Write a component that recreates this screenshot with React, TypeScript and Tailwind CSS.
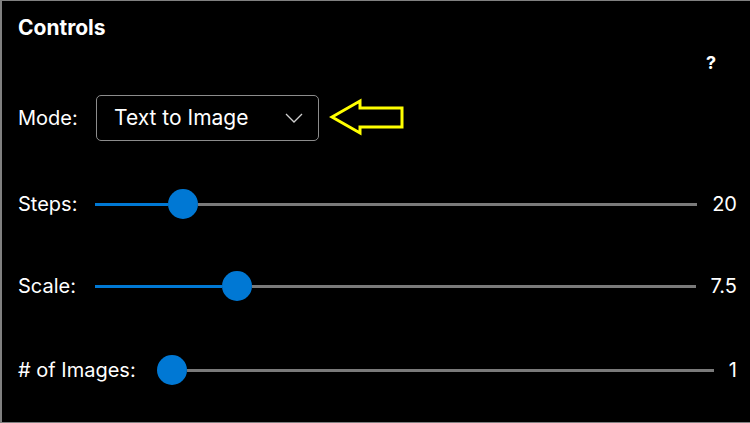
import React from "react";

type SliderProps = {
  label: string;
  labelWidth: string;
  value: string;
  frac: number;
};

function SliderRow({ label, labelWidth, value, frac }: SliderProps) {
  return (
    <div className="flex items-center h-[30px]">
      <span className={`${labelWidth} shrink-0 text-[20px] text-white`}>{label}</span>
      <div className="flex flex-1 items-center h-[30px]">
        {/* filled part of the track runs under the thumb */}
        <div
          className="h-[3px] bg-[#0078d4] shrink-0"
          style={{ width: `calc((100% - 30px) * ${frac})` }}
        ></div>
        <div className="w-[30px] h-[30px] rounded-full bg-[#0078d4] shrink-0"></div>
        <div className="h-[3px] flex-1 bg-[#7a7a7a]"></div>
      </div>
      <span className="ml-[15px] text-[20px] text-white">{value}</span>
    </div>
  );
}

function ArrowIcon() {
  return (
    <svg width="78" height="40" viewBox="0 0 78 40" className="ml-[10px]">
      <polygon
        points="3,19 31,3 31,10 73,10 73,29 31,29 31,35"
        fill="none"
        stroke="#ffff00"
        strokeWidth="3"
        strokeLinejoin="miter"
      />
    </svg>
  );
}

export default function App() {
  return (
    <div
      className="w-[750px] h-[423px] bg-black border-l-2 border-t border-b border-[#808080] flex flex-col pl-4 pr-[13px] text-white"
      style={{ fontFamily: "Inter, 'Noto Sans', sans-serif" }}
    >
      <div className="h-[54px] flex items-center">
        <h2 className="text-[21px] font-bold">Controls</h2>
      </div>
      <div className="h-[14px] flex items-center justify-end pr-[21px]">
        <span className="text-[18px] font-bold">?</span>
      </div>

      <div className="mt-[26px] h-[46px] flex items-center">
        <span className="w-[78px] shrink-0 text-[20px]">Mode:</span>
        <button className="w-[223px] h-[46px] flex items-center justify-between border border-[#8c8c8c] rounded-[5px] pl-[17px] pr-[15px] text-[21px]">
          <span>Text to Image</span>
          <svg width="18" height="10" viewBox="0 0 18 10">
            <path d="M1 1 L9 9 L17 1" fill="none" stroke="#cfcfcf" strokeWidth="1.3" />
          </svg>
        </button>
        <ArrowIcon />
      </div>

      <div className="mt-[48px]">
        <SliderRow label="Steps:" labelWidth="w-[77px]" value="20" frac={0.127} />
      </div>
      <div className="mt-[52px]">
        <SliderRow label="Scale:" labelWidth="w-[77px]" value="7.5" frac={0.222} />
      </div>
      <div className="mt-[54px]">
        <SliderRow label="# of Images:" labelWidth="w-[139px]" value="1" frac={0} />
      </div>
    </div>
  );
}
